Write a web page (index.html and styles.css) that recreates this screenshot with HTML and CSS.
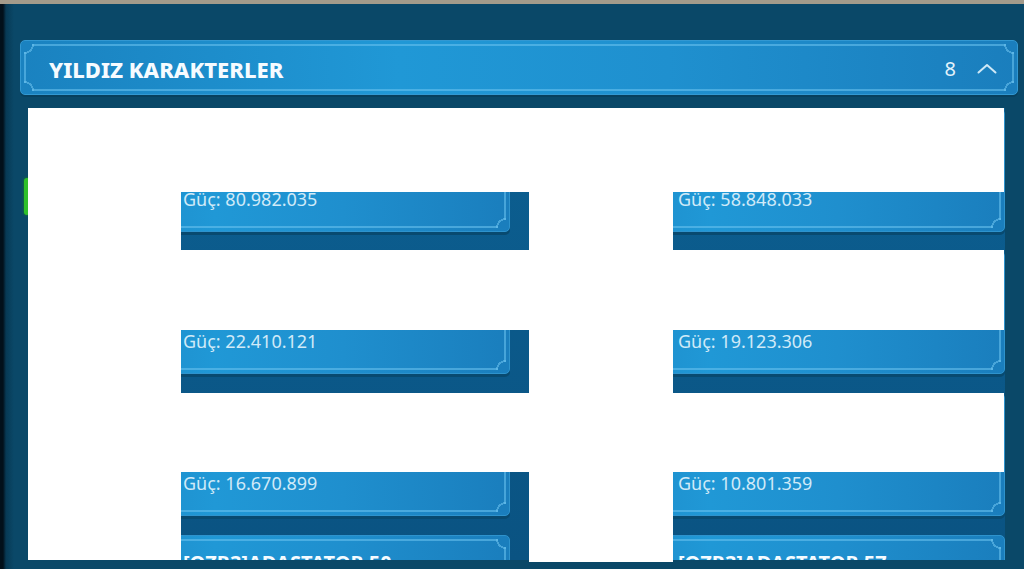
FILE: index.html
```html
<!DOCTYPE html>
<html lang="tr">
<head>
  <meta charset="UTF-8" />
  <meta name="viewport" content="width=device-width, initial-scale=1" />
  <title>Yıldız Karakterler</title>
  <link rel="stylesheet" href="styles.css">
</head>
<body>
  <div class="topline"></div>

  <div class="frame">
    <div class="section-head">
      <h2 class="section-title">YILDIZ KARAKTERLER</h2>
      <div class="section-meta">
        <span class="count">8</span>
        <svg class="chevron" width="20" height="11" viewBox="0 0 20 11">
          <polyline points="1.5,9.5 10,2 18.5,9.5" fill="none" stroke="#cfe8f6" stroke-width="2" stroke-linecap="round" stroke-linejoin="round"/>
        </svg>
      </div>
    </div>

    <div class="panel">
      <span class="online-tab"></span>

      <div class="list">
        <div class="card">
          <div class="avatar"></div>
          <div class="info">
            <div class="name">[OZR3]KARAKTER 01</div>
            <div class="rank">Seviye 60</div>
            <div class="power">Güç: 80.982.035</div>
          </div>
        </div>
        <div class="card">
          <div class="avatar"></div>
          <div class="info">
            <div class="name">[OZR3]KARAKTER 02</div>
            <div class="rank">Seviye 60</div>
            <div class="power">Güç: 58.848.033</div>
          </div>
        </div>
        <div class="card">
          <div class="avatar"></div>
          <div class="info">
            <div class="name">[OZR3]KARAKTER 03</div>
            <div class="rank">Seviye 58</div>
            <div class="power">Güç: 22.410.121</div>
          </div>
        </div>
        <div class="card">
          <div class="avatar"></div>
          <div class="info">
            <div class="name">[OZR3]KARAKTER 04</div>
            <div class="rank">Seviye 57</div>
            <div class="power">Güç: 19.123.306</div>
          </div>
        </div>
        <div class="card">
          <div class="avatar"></div>
          <div class="info">
            <div class="name">[OZR3]KARAKTER 05</div>
            <div class="rank">Seviye 55</div>
            <div class="power">Güç: 16.670.899</div>
          </div>
        </div>
        <div class="card">
          <div class="avatar"></div>
          <div class="info">
            <div class="name">[OZR3]KARAKTER 06</div>
            <div class="rank">Seviye 54</div>
            <div class="power">Güç: 10.801.359</div>
          </div>
        </div>
        <div class="card">
          <div class="avatar"></div>
          <div class="info">
            <div class="name">[OZR3]ADASTATOR 50</div>
            <div class="rank">Seviye 50</div>
            <div class="power">Güç: 9.412.550</div>
          </div>
        </div>
        <div class="card">
          <div class="avatar"></div>
          <div class="info">
            <div class="name">[OZR3]ADASTATOR 57</div>
            <div class="rank">Seviye 49</div>
            <div class="power">Güç: 8.106.217</div>
          </div>
        </div>
      </div>

      <!-- white cover blocks -->
      <div class="cover cover-top"></div>
      <div class="cover cover-left"></div>
      <div class="cover cover-mid"></div>
      <div class="cover cover-row1"></div>
      <div class="cover cover-row2"></div>
    </div>
  </div>
</body>
</html>
```

FILE: styles.css
```css
* {
  box-sizing: border-box;
}
html, body {
  margin: 0;
  padding: 0;
  width: 1024px;
  height: 569px;
  overflow: hidden;
}
body {
  font-family: 'Noto Sans', 'Open Sans', sans-serif;
  background: linear-gradient(90deg, #02101a 0, #02101a 3px, #073a55 6px, #0a4868 14px, #0a4868 100%);
  color: #fff;
}

.topline {
  height: 4px;
  background: #a39b8b;
}

.frame {
  padding: 36px 6px 0 20px;
}

/* header bar */
.section-head {
  position: relative;
  height: 55px;
  display: flex;
  align-items: center;
  justify-content: space-between;
  padding: 0 20px 0 28px;
  border-radius: 5px;
  border: 1px solid #3298d2;
  background: linear-gradient(90deg, #1a82c0 0%, #2098d6 38%, #1f90cf 65%, #1a7ebd 100%);
  box-shadow: 0 2px 0 #07405e;
}
.section-head::before,
.card::before {
  content: "";
  position: absolute;
  inset: 3px;
  border: 2px solid rgba(110, 196, 240, 0.55);
  border-radius: 2px;
  pointer-events: none;
}
.section-head::after,
.card::after {
  content: "";
  position: absolute;
  inset: 3px;
  pointer-events: none;
  background:
    radial-gradient(circle at 0 0, #1a82c0 0 8px, rgba(110, 196, 240, 0.55) 8px 10px, transparent 10px) 0 0 / 14px 14px no-repeat,
    radial-gradient(circle at 100% 0, #1a7ebd 0 8px, rgba(110, 196, 240, 0.55) 8px 10px, transparent 10px) 100% 0 / 14px 14px no-repeat,
    radial-gradient(circle at 0 100%, #1a82c0 0 8px, rgba(110, 196, 240, 0.55) 8px 10px, transparent 10px) 0 100% / 14px 14px no-repeat,
    radial-gradient(circle at 100% 100%, #1a7ebd 0 8px, rgba(110, 196, 240, 0.55) 8px 10px, transparent 10px) 100% 100% / 14px 14px no-repeat;
}

.section-title {
  margin: 0;
  font-size: 22px;
  font-weight: 800;
  color: #f6fbff;
  position: relative;
  top: 1px;
  z-index: 1;
}
.section-meta {
  display: flex;
  align-items: center;
  gap: 21px;
  position: relative;
  top: 1px;
  z-index: 1;
}
.count {
  font-size: 20px;
  color: #e3f2fb;
}
.chevron {
  display: block;
}

/* list area */
.panel {
  position: relative;
  margin: 13px 13px 0 14px;
}
.online-tab {
  position: absolute;
  left: -10px;
  top: 70px;
  width: 6px;
  height: 37px;
  border-radius: 3px;
  background: #2fc02a;
  box-shadow: 0 0 3px #1a8a16;
}
.list {
  height: 452px;
  overflow: hidden;
  display: grid;
  grid-template-columns: 1fr 1fr;
  column-gap: 19px;
  row-gap: 19px;
  padding-top: 1px;
  background: linear-gradient(180deg, #0c5f91, #0a5382);
}

.card {
  position: relative;
  height: 123px;
  display: flex;
  border-radius: 5px;
  border: 1px solid #2e93cd;
  background: linear-gradient(90deg, #1a82c0 0%, #2098d6 38%, #1f8fce 65%, #1a7ebd 100%);
  box-shadow: 0 3px 0 #084a70;
}
.avatar {
  width: 148px;
  flex: none;
}
.info {
  position: relative;
  z-index: 1;
  display: flex;
  flex-direction: column;
  padding: 15px 0 21px 0;
}
.name {
  font-size: 20px;
  line-height: 24px;
  font-weight: 700;
  color: #f4fbff;
}
.rank {
  font-size: 15px;
  line-height: 20px;
  color: #cde8f6;
}
.power {
  margin-top: auto;
  font-size: 18px;
  line-height: 22px;
  color: #d0eaf8;
}

/* white blocks laid over the list */
.cover {
  position: absolute;
  z-index: 3;
  background: #fff;
}
.cover-top {
  left: -6px;
  top: 0;
  width: 976px;
  height: 84px;
}
.cover-left {
  left: -6px;
  top: 0;
  width: 153px;
  height: 452px;
}
.cover-mid {
  left: 495px;
  top: 0;
  width: 144px;
  height: 454px;
}
.cover-row1 {
  left: 147px;
  top: 142px;
  width: 823px;
  height: 80px;
}
.cover-row2 {
  left: 147px;
  top: 285px;
  width: 823px;
  height: 79px;
}
```
